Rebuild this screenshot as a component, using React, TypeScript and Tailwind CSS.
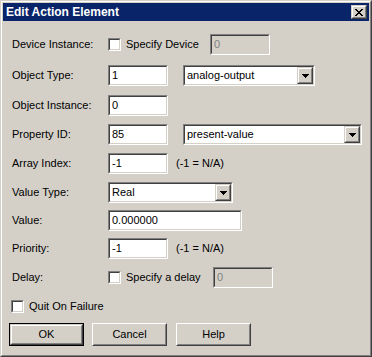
import React from 'react';

const FONT = { fontFamily: '"Liberation Sans", Arial, sans-serif' };

const Sunken: React.FC<{ className?: string; disabled?: boolean; children?: React.ReactNode }> = ({
  className = '',
  disabled,
  children,
}) => (
  <div className={`border border-t-[#808080] border-l-[#808080] border-r-white border-b-white ${className}`}>
    <div
      className={`h-full w-full border border-t-[#404040] border-l-[#404040] border-r-[#D4D0C8] border-b-[#D4D0C8] ${
        disabled ? 'bg-[#D4D0C8]' : 'bg-white'
      }`}
    >
      {children}
    </div>
  </div>
);

const TextBox: React.FC<{ value: string; width: string; disabled?: boolean }> = ({ value, width, disabled }) => (
  <Sunken className={`h-[21px] ${width}`} disabled={disabled}>
    <div className={`pl-[2px] text-[11px] leading-[17px] ${disabled ? 'text-[#808080]' : 'text-black'}`}>{value}</div>
  </Sunken>
);

const Raised: React.FC<{ className?: string; children?: React.ReactNode }> = ({ className = '', children }) => (
  <div className={`border border-t-[#D4D0C8] border-l-[#D4D0C8] border-r-[#404040] border-b-[#404040] ${className}`}>
    <div className="h-full w-full border border-t-white border-l-white border-r-[#808080] border-b-[#808080] bg-[#D4D0C8] flex items-center justify-center">
      {children}
    </div>
  </div>
);

const Combo: React.FC<{ value: string; width: string }> = ({ value, width }) => (
  <Sunken className={`h-[21px] ${width}`}>
    <div className="flex h-full">
      <div className="flex-1 pl-[2px] text-[11px] leading-[17px] text-black">{value}</div>
      <Raised className="w-[16px] h-[17px]">
        <svg width="7" height="4" viewBox="0 0 7 4">
          <path d="M0 0h7v1H0zM1 1h5v1H1zM2 2h3v1H2zM3 3h1v1H3z" fill="#000" />
        </svg>
      </Raised>
    </div>
  </Sunken>
);

const CheckBox: React.FC = () => <Sunken className="w-[13px] h-[13px]" />;

const Label: React.FC<{ children: React.ReactNode }> = ({ children }) => (
  <div className="w-[96px] shrink-0 text-[11px] text-black">{children}</div>
);

const Button: React.FC<{ label: string; isDefault?: boolean }> = ({ label, isDefault }) =>
  isDefault ? (
    <div className="w-[75px] h-[23px] border border-black">
      <Raised className="w-full h-full">
        <span className="text-[11px] text-black">{label}</span>
      </Raised>
    </div>
  ) : (
    <div className="w-[75px] h-[23px] border border-t-white border-l-white border-r-[#404040] border-b-[#404040]">
      <div className="h-full w-full border border-t-[#D4D0C8] border-l-[#D4D0C8] border-r-[#808080] border-b-[#808080] flex items-center justify-center">
        <span className="text-[11px] text-black">{label}</span>
      </div>
    </div>
  );

export default function App() {
  return (
    <div style={FONT} className="w-[372px] h-[357px] border border-t-[#D4D0C8] border-l-[#D4D0C8] border-r-[#404040] border-b-[#404040]">
      <div className="h-full w-full border border-t-white border-l-white border-r-[#808080] border-b-[#808080] bg-[#D4D0C8] p-px flex flex-col">
        <div className="h-[18px] bg-[#0A246A] flex items-center justify-between pl-[3px] pr-[2px]">
          <span className="text-white font-bold text-[12px] leading-none">Edit Action Element</span>
          <Raised className="w-[16px] h-[14px]">
            <svg width="8" height="7" viewBox="0 0 8 7">
              <path
                d="M0 0h2v1H0zM6 0h2v1H6zM1 1h2v1H1zM5 1h2v1H5zM2 2h4v1H2zM3 3h2v1H3zM2 4h4v1H2zM1 5h2v1H1zM5 5h2v1H5zM0 6h2v1H0zM6 6h2v1H6z"
                fill="#000"
              />
            </svg>
          </Raised>
        </div>

        <div className="flex flex-col">
          <div className="mt-[13px] pl-[9px] flex items-center h-[21px]">
            <Label>Device Instance:</Label>
            <div className="w-[102px] flex items-center">
              <CheckBox />
              <span className="ml-[5px] text-[11px] text-black">Specify Device</span>
            </div>
            <TextBox value="0" width="w-[60px]" disabled />
          </div>

          <div className="mt-[10px] pl-[9px] flex items-center h-[21px]">
            <Label>Object Type:</Label>
            <TextBox value="1" width="w-[60px]" />
            <div className="ml-[15px]">
              <Combo value="analog-output" width="w-[132px]" />
            </div>
          </div>

          <div className="mt-[9px] pl-[9px] flex items-center h-[21px]">
            <Label>Object Instance:</Label>
            <TextBox value="0" width="w-[60px]" />
          </div>

          <div className="mt-[8px] pl-[9px] flex items-center h-[21px]">
            <Label>Property ID:</Label>
            <TextBox value="85" width="w-[60px]" />
            <div className="ml-[15px]">
              <Combo value="present-value" width="w-[179px]" />
            </div>
          </div>

          <div className="mt-[8px] pl-[9px] flex items-center h-[21px]">
            <Label>Array Index:</Label>
            <TextBox value="-1" width="w-[60px]" />
            <span className="ml-[8px] text-[11px] text-black">(-1 = N/A)</span>
          </div>

          <div className="mt-[8px] pl-[9px] flex items-center h-[21px]">
            <Label>Value Type:</Label>
            <Combo value="Real" width="w-[125px]" />
          </div>

          <div className="mt-[7px] pl-[9px] flex items-center h-[21px]">
            <Label>Value:</Label>
            <TextBox value="0.000000" width="w-[134px]" />
          </div>

          <div className="mt-[7px] pl-[9px] flex items-center h-[21px]">
            <Label>Priority:</Label>
            <TextBox value="-1" width="w-[60px]" />
            <span className="ml-[8px] text-[11px] text-black">(-1 = N/A)</span>
          </div>

          <div className="mt-[8px] pl-[9px] flex items-center h-[21px]">
            <Label>Delay:</Label>
            <div className="w-[105px] flex items-center">
              <CheckBox />
              <span className="ml-[5px] text-[11px] text-black">Specify a delay</span>
            </div>
            <TextBox value="0" width="w-[60px]" disabled />
          </div>

          <div className="mt-[12px] pl-[8px] flex items-center h-[13px]">
            <CheckBox />
            <span className="ml-[5px] text-[11px] text-black">Quit On Failure</span>
          </div>

          <div className="mt-[10px] pl-[6px] flex items-center gap-[8px]">
            <Button label="OK" isDefault />
            <Button label="Cancel" />
            <div className="ml-px">
              <Button label="Help" />
            </div>
          </div>
        </div>
      </div>
    </div>
  );
}
